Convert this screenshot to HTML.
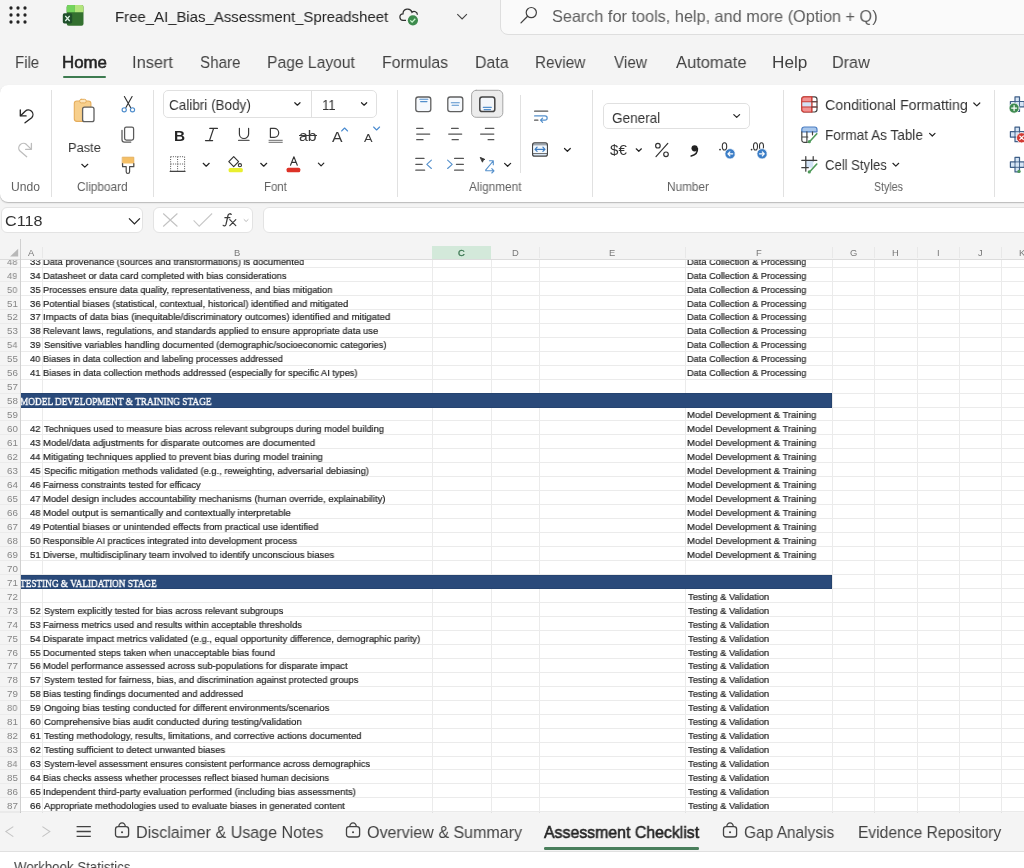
<!DOCTYPE html>
<html><head><meta charset="utf-8"><style>
html,body{margin:0;padding:0}
body{width:1024px;height:868px;overflow:hidden;position:relative;background:#f4f4f4;font-family:"Liberation Sans",sans-serif}
.a{position:absolute}
.t{position:absolute;white-space:pre;transform-origin:0 0;will-change:transform}
#top{position:absolute;left:0;top:0;width:1024px;height:84px;background:#f4f4f4}
</style></head><body><div id=top></div><svg class=a style="left:0;top:0" width="40" height="30" fill="#242424"><circle cx="11" cy="8" r="1.65"/><circle cx="11" cy="15" r="1.65"/><circle cx="11" cy="22" r="1.65"/><circle cx="18" cy="8" r="1.65"/><circle cx="18" cy="15" r="1.65"/><circle cx="18" cy="22" r="1.65"/><circle cx="25" cy="8" r="1.65"/><circle cx="25" cy="15" r="1.65"/><circle cx="25" cy="22" r="1.65"/></svg><svg class=a style="left:60px;top:3px" width="28" height="26" viewBox="60 3 28 26">
<rect x="66.7" y="5.1" width="16.8" height="20.7" rx="2" fill="#33702f"/>
<path d="M68.7 5.1h6.2v7.1h-8.2v-5.1a2 2 0 0 1 2-2z" fill="#74d45c"/>
<path d="M74.9 5.1h6.6a2 2 0 0 1 2 2v5.1h-8.6z" fill="#b3e57c"/>
<rect x="62.8" y="13.3" width="9.4" height="10.1" rx="1.6" fill="#1f4f2b"/>
<path d="M65.3 15.8l4.4 5.2M69.7 15.8l-4.4 5.2" stroke="#dff5e6" stroke-width="1.3"/>
</svg><div class=t style="left:114.73px;top:9.00px;font-size:15.3px;line-height:15.3px;color:#242424;transform:scaleX(0.9764);">Free_AI_Bias_Assessment_Spreadsheet</div><svg class=a style="left:395px;top:3px" width="30" height="26" viewBox="395 3 30 26">
<path d="M406 20.4h-2.6a3.3 3.3 0 0 1-0.4-6.6a4.6 4.6 0 0 1 9-1.4a3.2 3.2 0 0 1 5.4 2.3" fill="none" stroke="#303030" stroke-width="1.25"/>
<circle cx="412.9" cy="20.3" r="5.1" fill="#3d8b4d"/>
<path d="M410.3 20.4l1.8 1.7l3.2-3.4" fill="none" stroke="#c9f5cf" stroke-width="1.3"/>
</svg><svg class=a style="left:455px;top:12px" width="14" height="10"><path d="M2.3 2.2l4.8 4.8l4.8-4.8" fill="none" stroke="#424242" stroke-width="1.1"/></svg><div class=a style="left:500px;top:-8px;width:540px;height:42.8px;background:#fafafa;border:1px solid #dedede;border-radius:8px;box-sizing:border-box"></div><svg class=a style="left:518px;top:5px" width="22" height="22" viewBox="518 5 22 22"><circle cx="531.3" cy="12.6" r="5.1" fill="none" stroke="#424242" stroke-width="1.2"/><path d="M527.6 16.3l-6.6 6.6" stroke="#424242" stroke-width="1.3" stroke-linecap="round"/></svg><div class=t style="left:552.29px;top:8.00px;font-size:16.5px;line-height:16.5px;color:#5c5c5c;transform:scaleX(0.9847);">Search for tools, help, and more (Option + Q)</div><div class=t style="left:14.73px;top:55.00px;font-size:16.7px;line-height:16.7px;color:#424242;transform:scaleX(0.8986);">File</div><div class=t style="left:61.88px;top:55.00px;font-size:16.7px;line-height:16.7px;color:#242424;transform:scaleX(1.0102);-webkit-text-stroke:0.55px #242424;">Home</div><div class=t style="left:132.42px;top:55.00px;font-size:16.7px;line-height:16.7px;color:#424242;transform:scaleX(0.9823);">Insert</div><div class=t style="left:200.43px;top:55.00px;font-size:16.7px;line-height:16.7px;color:#424242;transform:scaleX(0.9086);">Share</div><div class=t style="left:267.18px;top:55.00px;font-size:16.7px;line-height:16.7px;color:#424242;transform:scaleX(0.9380);">Page Layout</div><div class=t style="left:382.46px;top:55.00px;font-size:16.7px;line-height:16.7px;color:#424242;transform:scaleX(0.9488);">Formulas</div><div class=t style="left:474.96px;top:55.00px;font-size:16.7px;line-height:16.7px;color:#424242;transform:scaleX(0.9537);">Data</div><div class=t style="left:535.20px;top:55.00px;font-size:16.7px;line-height:16.7px;color:#424242;transform:scaleX(0.9170);">Review</div><div class=t style="left:613.75px;top:55.00px;font-size:16.7px;line-height:16.7px;color:#424242;transform:scaleX(0.9211);">View</div><div class=t style="left:675.50px;top:55.00px;font-size:16.7px;line-height:16.7px;color:#424242;transform:scaleX(0.9872);">Automate</div><div class=t style="left:771.66px;top:55.00px;font-size:16.7px;line-height:16.7px;color:#424242;transform:scaleX(1.0289);">Help</div><div class=t style="left:832.44px;top:55.00px;font-size:16.7px;line-height:16.7px;color:#424242;transform:scaleX(0.9691);">Draw</div><div class=a style="left:62.8px;top:75.9px;width:43.6px;height:2.2px;background:#3d7b50;border-radius:1px"></div><div class=a style="left:0;top:84.6px;width:1060px;height:117px;background:#fff;border-radius:8px;box-shadow:0 1px 1.5px rgba(0,0,0,.22),0 0.5px 0 rgba(0,0,0,.08)"></div><div class=a style="left:50.75px;top:90px;width:1px;height:106.5px;background:#e1e1e1"></div><div class=a style="left:153.10px;top:90px;width:1px;height:106.5px;background:#e1e1e1"></div><div class=a style="left:396.90px;top:90px;width:1px;height:106.5px;background:#e1e1e1"></div><div class=a style="left:591.70px;top:90px;width:1px;height:106.5px;background:#e1e1e1"></div><div class=a style="left:783.20px;top:90px;width:1px;height:106.5px;background:#e1e1e1"></div><div class=a style="left:993.50px;top:90px;width:1px;height:106.5px;background:#e1e1e1"></div><div class=a style="left:519.6px;top:95px;width:1px;height:78px;background:#e1e1e1"></div><div class=t style="left:10.85px;top:181.00px;font-size:12.1px;line-height:12.1px;color:#616161;transform:scaleX(0.9899);">Undo</div><div class=t style="left:76.84px;top:181.00px;font-size:12.1px;line-height:12.1px;color:#616161;transform:scaleX(0.9793);">Clipboard</div><div class=t style="left:263.81px;top:181.00px;font-size:12.1px;line-height:12.1px;color:#616161;transform:scaleX(0.9439);">Font</div><div class=t style="left:468.70px;top:181.00px;font-size:12.1px;line-height:12.1px;color:#616161;transform:scaleX(0.9731);">Alignment</div><div class=t style="left:666.58px;top:181.00px;font-size:12.1px;line-height:12.1px;color:#616161;transform:scaleX(0.9755);">Number</div><div class=t style="left:874.27px;top:181.00px;font-size:12.1px;line-height:12.1px;color:#616161;transform:scaleX(0.8728);">Styles</div><svg class=a style="left:0;top:84px" width="1024" height="118" viewBox="0 84 1024 118" fill="none" stroke-linecap="round" stroke-linejoin="round">
<!-- undo -->
<path d="M20.3 110v5.9h5.8" stroke="#242424" stroke-width="1.3"/>
<path d="M20.8 115.5l4.4-4.3a4.6 4.6 0 0 1 6.5 6.5l-6.7 5.1" stroke="#242424" stroke-width="1.3"/>
<!-- redo -->
<path d="M31.4 143.4v5.9h-5.8" stroke="#bdbdbd" stroke-width="1.3"/>
<path d="M30.9 148.9l-4.4-4.3a4.6 4.6 0 0 0-6.5 6.5l6.7 5.6" stroke="#bdbdbd" stroke-width="1.3"/>
<!-- paste -->
<rect x="74.3" y="101" width="16.6" height="20.4" rx="2.6" fill="#f7cf8c" stroke="#e5ad5c" stroke-width="1.1"/>
<rect x="79.6" y="99.3" width="6.6" height="3.6" rx="1.6" fill="#fbe6c0" stroke="#e5ad5c" stroke-width="1"/>
<rect x="82.6" y="107.2" width="11.4" height="14.5" rx="2" fill="#fff" stroke="#5f5f5f" stroke-width="1.3"/>
<path d="M81.8 164.3l3 2.8l3-2.8" stroke="#242424" stroke-width="1.2"/>
<!-- cut -->
<path d="M124.4 96.5l6.2 11M132.1 96.5l-6.2 11" stroke="#333" stroke-width="1.15"/>
<circle cx="124.2" cy="109.8" r="2.1" stroke="#4d8ccc" stroke-width="1.15" fill="#fff"/>
<circle cx="132.5" cy="109.8" r="2.1" stroke="#4d8ccc" stroke-width="1.15" fill="#fff"/>
<!-- copy -->
<rect x="124.6" y="127.1" width="9" height="12.9" rx="1.7" stroke="#5a5a5a" stroke-width="1.25" fill="#fff"/>
<path d="M122 130.3v9.4a2.4 2.4 0 0 0 2.4 2.4h6.4" stroke="#5a5a5a" stroke-width="1.25"/>
<!-- format painter -->
<path d="M122.6 157.2h11.2v8.4h-11.2z" fill="#f5bf65" stroke="#e0a850" stroke-width="0.8"/>
<path d="M122.6 163.5v3.2h3.6v5.1a1.7 1.7 0 0 0 3.4 0v-5.1h4.2v-3.2" stroke="#4a4a4a" stroke-width="1.2" fill="#fff"/>
<!-- font chevrons -->
<path d="M294.8 102.7l2.6 2.5l2.6-2.5" stroke="#242424" stroke-width="1.2"/>
<path d="M361.5 102.7l2.6 2.5l2.6-2.5" stroke="#242424" stroke-width="1.2"/>
<!-- I -->
<path d="M209.8 128.4h7.6M205.5 140.6h7.1M213.6 128.4l-4.1 12.2" stroke="#333" stroke-width="1.25"/>
<!-- U -->
<path d="M239.4 128.3v5.6a4.6 4.6 0 0 0 9.2 0v-5.6" stroke="#3a3a3a" stroke-width="1.2"/>
<path d="M238.6 140.4h10.4" stroke="#5a5a5a" stroke-width="1.3"/>
<!-- D -->
<path d="M270.4 128.3v9h3.8a4.5 4.5 0 0 0 0-9z" stroke="#3a3a3a" stroke-width="1.2"/>
<path d="M269 140.3h13.3M269 142.3h13.3" stroke="#6a6a6a" stroke-width="1"/>
<!-- Borders -->
<path d="M170.6 156.7h14M170.6 164h14M170.6 156.7v14.5M177.6 156.7v14.5M184.6 156.7v14.5" stroke="#555" stroke-width="1" stroke-dasharray="1 1.3" stroke-linecap="butt"/>
<path d="M170.2 171.4h14.8" stroke="#444" stroke-width="1.2"/>
<path d="M203.2 163.3l3 2.9l3-2.9" stroke="#242424" stroke-width="1.2"/>
<!-- fill -->
<rect x="228.6" y="168" width="14.2" height="4.3" rx="1.5" fill="#e9ef2f" stroke="none"/>
<path d="M233.7 156.6l4.9 5.1l-4.9 4.9l-4.9-4.9z" stroke="#333" stroke-width="1.15"/>
<circle cx="239.9" cy="165.2" r="1.6" stroke="#333" stroke-width="1.1"/>
<path d="M260.7 163.3l3 2.9l3-2.9" stroke="#242424" stroke-width="1.2"/>
<!-- font color -->
<rect x="286.6" y="167.7" width="13.7" height="4.6" rx="1.6" fill="#dd3227" stroke="none"/>
<path d="M290.5 165.3l3.4-8.6l3.4 8.6M291.6 162.4h4.6" stroke="#333" stroke-width="1.1"/>
<path d="M318.4 163.2l2.7 2.7l2.7-2.7" stroke="#242424" stroke-width="1.2"/>
<!-- alignment top row -->
<rect x="415.8" y="97" width="15" height="14.6" rx="2.4" fill="#f6f9fd" stroke="#5f5f5f" stroke-width="1.3"/>
<path d="M419.8 99.2h8M420.6 101.6h6.4" stroke="#5490cc" stroke-width="1.1"/>
<rect x="447.8" y="97" width="15" height="14.6" rx="2.4" fill="#f6f9fd" stroke="#5f5f5f" stroke-width="1.3"/>
<path d="M451.3 102.8h8M452.1 105.2h6.4" stroke="#5490cc" stroke-width="1.1"/>
<rect x="471.6" y="90.3" width="31.2" height="27" rx="4.5" fill="#ececec" stroke="#a6a6a6" stroke-width="1"/>
<rect x="479.8" y="97" width="15" height="14.6" rx="2.4" fill="#f3f6fa" stroke="#444" stroke-width="1.5"/>
<path d="M483.3 107.4h8M484.1 109.6h6.4" stroke="#5490cc" stroke-width="1.1"/>
<!-- row 2 -->
<path d="M416.7 128.4h6.3M416.7 134h13M416.7 139.7h6.3" stroke="#555" stroke-width="1.25"/>
<path d="M451.6 128.4h6.6M448.7 134h13M452.1 139.7h6.2" stroke="#555" stroke-width="1.25"/>
<path d="M485.4 128.4h8.4M480.6 134h13.2M488.1 139.7h5.7" stroke="#555" stroke-width="1.25"/>
<!-- row 3 -->
<path d="M415.8 158.4h8.2M415.8 164.3h6.4M415.8 170.2h8.8" stroke="#555" stroke-width="1.25"/>
<path d="M431.4 160.1l-4.6 4.2l4.6 4.2" stroke="#5490cc" stroke-width="1.1"/>
<path d="M454.6 158.4h8.8M456.4 164.3h7M454.6 170.2h8.8" stroke="#555" stroke-width="1.25"/>
<path d="M447.6 160.1l4.6 4.2l-4.6 4.2" stroke="#5490cc" stroke-width="1.1"/>
<path d="M480.6 157.6l4.2 1.8l-1.6 0.6l-0.6 1.8z" stroke="#333" stroke-width="1" fill="#333"/>
<path d="M485.6 170.2l7.6-9.2M489.4 160.8h3.9v3.9M485.8 170.8h8M491.8 168.6l2.2 2.2l-2.2 2.2" stroke="#5490cc" stroke-width="1.1"/>
<path d="M504.6 163.4l3 2.9l3-2.9" stroke="#242424" stroke-width="1.2"/>
<!-- wrap -->
<path d="M534.6 111.2h13.1" stroke="#555" stroke-width="1.25"/>
<path d="M534.6 115.9h10.4a2.15 2.15 0 0 1 0 4.3h-4.4M542.6 118.1l-2.1 2.1l2.1 2.1" stroke="#5490cc" stroke-width="1.2"/>
<path d="M534.6 120.2h3.3" stroke="#555" stroke-width="1.25"/>
<!-- merge -->
<rect x="532.6" y="142.8" width="14.8" height="13.4" rx="2" fill="#d8e6f4" stroke="#444" stroke-width="1.2"/>
<path d="M533.2 145h13.6M533.2 153.5h13.6" stroke="#555" stroke-width="0.9"/>
<rect x="533.3" y="145.4" width="13.4" height="7.7" fill="#f3f8fd" stroke="none"/>
<path d="M535 149.3h10M537.1 147.2l-2.1 2.1l2.1 2.1M542.9 147.2l2.1 2.1l-2.1 2.1" stroke="#3d7cc0" stroke-width="1.2"/>
<path d="M564.5 148.5l2.9 2.8l2.9-2.8" stroke="#242424" stroke-width="1.2"/>
<!-- number chevrons -->
<path d="M733.8 114.6l2.9 2.8l2.9-2.8" stroke="#242424" stroke-width="1.2"/>
<path d="M636.2 148.8l2.6 2.5l2.6-2.5" stroke="#242424" stroke-width="1.2"/>
<!-- decimals -->
<circle cx="720" cy="149.6" r="0.9" fill="#333" stroke="none"/>
<ellipse cx="724.5" cy="146.4" rx="2.2" ry="3.6" stroke="#333" stroke-width="1.1"/>
<circle cx="730.1" cy="153.8" r="5.2" fill="#3b7dc6" stroke="#fff" stroke-width="0.8"/>
<path d="M732.7 153.8h-4.6M729.9 151.8l-2 2l2 2" stroke="#fff" stroke-width="1.2"/>
<circle cx="751.6" cy="149.6" r="0.9" fill="#333" stroke="none"/>
<ellipse cx="755.5" cy="146.4" rx="2" ry="3.6" stroke="#333" stroke-width="1.1"/>
<ellipse cx="761.5" cy="146.4" rx="2" ry="3.6" stroke="#333" stroke-width="1.1"/>
<circle cx="762.1" cy="153.8" r="5.2" fill="#3b7dc6" stroke="#fff" stroke-width="0.8"/>
<path d="M759.5 153.8h4.6M762.3 151.8l2 2l-2 2" stroke="#fff" stroke-width="1.2"/>
<!-- CF icon -->
<rect x="801.8" y="96.8" width="15.2" height="15.2" rx="2.4" fill="#fff" stroke="#444" stroke-width="1.2"/>
<path d="M804.2 96.8h7.6v15.2h-7.6a2.4 2.4 0 0 1-2.4-2.4v-10.4a2.4 2.4 0 0 1 2.4-2.4z" fill="#f19292" stroke="#d8413a" stroke-width="1.2"/>
<rect x="802.4" y="102" width="9.4" height="4.8" fill="#d3e3f6" stroke="none"/>
<path d="M801.8 101.8h15.2M801.8 107h15.2M811.8 96.8v15.2" stroke="#c9403a" stroke-width="1.1"/>
<path d="M811.8 101.8h5.2M811.8 107h5.2" stroke="#444" stroke-width="1.1"/>
<!-- FAT icon -->
<path d="M801.8 131.8v-2.4a2.4 2.4 0 0 1 2.4-2.4h10.4a2.4 2.4 0 0 1 2.4 2.4v2.4z" fill="#a9c7ec" stroke="#4d7fc2" stroke-width="1.2"/>
<path d="M801.8 131.8v8.2a2.4 2.4 0 0 0 2.4 2.4h3M801.8 137h6M806.9 131.8v10.2M812.5 131.8v3" stroke="#444" stroke-width="1.2"/>
<path d="M816.8 133.8l-6.6 7.2" stroke="#4f9a5a" stroke-width="1.6"/>
<circle cx="809.3" cy="141.7" r="1.6" fill="#4f9a5a" stroke="none"/>
<!-- Cell styles icon -->
<rect x="805.8" y="160.4" width="7.4" height="7.3" fill="#d3e3f6" stroke="none"/>
<path d="M801.8 160.4h15M801.8 167.7h6.5M805.8 156.6v14.6M813.2 156.6v4.2" stroke="#3a3a3a" stroke-width="1.2"/>
<path d="M816.8 164l-6.6 7.2" stroke="#4f9a5a" stroke-width="1.6"/>
<circle cx="809.3" cy="171.9" r="1.6" fill="#4f9a5a" stroke="none"/>
<!-- cells group icons -->
<path d="M1015 96.9h4.5v4.6h4.8v5.4h-4.8v4.6h-4.5v-4.6h-4.6v-5.4h4.6z" fill="#d6e5f5" stroke="#3f5f88" stroke-width="1.2"/><path d="M1015 101.5v5.4M1019.5 101.5v5.4M1015 101.5h4.5M1015 106.9h4.5" stroke="#3f5f88" stroke-width="0.9"/>
<circle cx="1014.1" cy="108.1" r="5.1" fill="#3e8a4e" stroke="#fff" stroke-width="0.8"/>
<path d="M1014.1 105.6v5M1011.6 108.1h5" stroke="#fff" stroke-width="1.2"/>
<path d="M1015 127.1h4.5v4.6h4.8v5.4h-4.8v4.6h-4.5v-4.6h-4.6v-5.4h4.6z" fill="#d6e5f5" stroke="#3f5f88" stroke-width="1.2"/><path d="M1015 131.7v5.4M1019.5 131.7v5.4M1015 131.7h4.5M1015 137.1h4.5" stroke="#3f5f88" stroke-width="0.9"/>
<circle cx="1021.6" cy="137.8" r="5.1" fill="#d23a32" stroke="#fff" stroke-width="0.8"/>
<path d="M1019.8 136l3.6 3.6M1023.4 136l-3.6 3.6" stroke="#fff" stroke-width="1.1"/>
<path d="M1015 157.3h4.5v4.6h4.8v5.4h-4.8v4.6h-4.5v-4.6h-4.6v-5.4h4.6z" fill="#d6e5f5" stroke="#3f5f88" stroke-width="1.2"/><path d="M1015 161.9v5.4M1019.5 161.9v5.4M1015 161.9h4.5M1015 167.3h4.5" stroke="#3f5f88" stroke-width="0.9"/>
<circle cx="1019" cy="171.4" r="1.7" fill="#4f9a5a" stroke="none"/>
<!-- styles chevrons -->
<path d="M973.8 103l3 2.9l3-2.9M929.6 133.3l2.7 2.7l2.7-2.7M892.9 163.3l2.9 2.8l2.9-2.8" stroke="#242424" stroke-width="1.2"/>
<!-- percent -->
<circle cx="657.9" cy="145.7" r="2.3" stroke="#333" stroke-width="1.2"/>
<circle cx="666" cy="154.3" r="2.3" stroke="#333" stroke-width="1.2"/>
<path d="M667.8 143.4l-11.8 13.2" stroke="#333" stroke-width="1.2"/>
<!-- comma style -->
<circle cx="694.6" cy="148.3" r="3.1" fill="#222" stroke="none"/>
<path d="M697.4 148.6c0.3 3.6-2 6.4-6.2 7.4" stroke="#222" stroke-width="1.6"/>
</svg>
<div class=t style="left:173.84px;top:129.00px;font-size:14px;line-height:14px;color:#242424;font-weight:700;transform:scaleX(1.0971);">B</div><div class=t style="left:299.00px;top:129.00px;font-size:14px;line-height:14px;color:#3a3a3a;transform:scaleX(1.1327);">ab</div><div class=a style="left:298.6px;top:134.7px;width:18.3px;height:1.2px;background:#3a3a3a"></div><div class=t style="left:331.60px;top:130.00px;font-size:14.5px;line-height:14.5px;color:#3a3a3a;transform:scaleX(1.0881);">A</div><div class=t style="left:363.60px;top:133.00px;font-size:11.5px;line-height:11.5px;color:#3a3a3a;transform:scaleX(1.1130);">A</div><svg class=a style="left:340px;top:125px" width="42" height="10" viewBox="340 125 42 10" fill="none" stroke="#4a8bd0" stroke-width="1.1" stroke-linecap="round" stroke-linejoin="round"><path d="M341.6 131l3-3l3 3"/><path d="M373.6 127l3 3l3-3"/></svg><div class=t style="left:609.70px;top:143.00px;font-size:14px;line-height:14px;color:#333;transform:scaleX(1.0814);">$€</div><div class=t style="left:67.75px;top:141.00px;font-size:13.7px;line-height:13.7px;color:#333333;transform:scaleX(0.9354);">Paste</div><div class=a style="left:163.4px;top:90.2px;width:214.1px;height:27.6px;border:1px solid #e0e0e0;border-radius:5px;box-sizing:border-box"></div><div class=a style="left:310.6px;top:91px;width:1px;height:26px;background:#e0e0e0"></div><div class=t style="left:168.77px;top:98.00px;font-size:14.2px;line-height:14.2px;color:#333333;transform:scaleX(0.9526);">Calibri (Body)</div><div class=t style="left:321.68px;top:98.00px;font-size:14.2px;line-height:14.2px;color:#333333;transform:scaleX(0.9264);">11</div><div class=a style="left:602.7px;top:102.6px;width:147.3px;height:26.6px;border:1px solid #e0e0e0;border-radius:5px;box-sizing:border-box"></div><div class=t style="left:611.96px;top:111.00px;font-size:14.4px;line-height:14.4px;color:#333333;transform:scaleX(0.9414);">General</div><div class=t style="left:825.03px;top:98.00px;font-size:14.8px;line-height:14.8px;color:#333333;transform:scaleX(0.9588);">Conditional Formatting</div><div class=t style="left:824.64px;top:128.00px;font-size:14.8px;line-height:14.8px;color:#333333;transform:scaleX(0.9180);">Format As Table</div><div class=t style="left:825.09px;top:158.00px;font-size:14.8px;line-height:14.8px;color:#333333;transform:scaleX(0.8843);">Cell Styles</div><div class=a style="left:1px;top:206.8px;width:142px;height:26.2px;background:#fff;border:1px solid #e3e3e3;border-radius:6px;box-sizing:border-box"></div><div class=t style="left:5.14px;top:213.00px;font-size:15.5px;line-height:15.5px;color:#333333;transform:scaleX(1.0420);">C118</div><svg class=a style="left:126px;top:215px" width="16" height="12"><path d="M3 3.4l5.45 5.45l5.45-5.45" fill="none" stroke="#242424" stroke-width="1.3"/></svg><div class=a style="left:153.3px;top:206.8px;width:100px;height:26.2px;background:#fff;border:1px solid #e3e3e3;border-radius:6px;box-sizing:border-box"></div><svg class=a style="left:153px;top:207px" width="100" height="26" viewBox="153 207 100 26"><path d="M163.2 213.5l14.2 13M177.4 213.5l-14.2 13" stroke="#c2c2c2" stroke-width="1.1"/><path d="M193.6 220.3l5.6 5.8l12.9-12.6" fill="none" stroke="#c8c8c8" stroke-width="1.1"/><path d="M243.8 219.3l2.3 2.2l2.3-2.2" fill="none" stroke="#b0b0b0" stroke-width="0.9"/></svg><svg class=a style="left:215px;top:205px" width="30" height="30" viewBox="215 205 30 30" fill="none" stroke="#3a3a3a" stroke-linecap="round"><path d="M231.2 214.4c-0.6-0.9-2.4-1-3.1 0.6l-2.1 9.4c-0.4 1.6-2 1.8-2.8 0.9" stroke-width="1.25"/><path d="M224.9 217.7h5" stroke-width="1.2"/><path d="M229.8 219.6l6 6M235.8 219.6l-6 6" stroke-width="1.2"/></svg><div class=a style="left:263px;top:206.8px;width:800px;height:26.2px;background:#fff;border:1px solid #e3e3e3;border-radius:6px;box-sizing:border-box"></div><div class=a style="left:20.2px;top:239px;width:1004px;height:573.5px;background:#fff"></div><div class=a style="left:0;top:258px;width:20.2px;height:554.5px;background:#f4f4f4"></div><div class=a style="left:0;top:266.90px;width:1024px;height:1px;background:#ebebeb"></div><div class=a style="left:0;top:280.86px;width:1024px;height:1px;background:#ebebeb"></div><div class=a style="left:0;top:294.82px;width:1024px;height:1px;background:#ebebeb"></div><div class=a style="left:0;top:308.78px;width:1024px;height:1px;background:#ebebeb"></div><div class=a style="left:0;top:322.74px;width:1024px;height:1px;background:#ebebeb"></div><div class=a style="left:0;top:336.70px;width:1024px;height:1px;background:#ebebeb"></div><div class=a style="left:0;top:350.66px;width:1024px;height:1px;background:#ebebeb"></div><div class=a style="left:0;top:364.62px;width:1024px;height:1px;background:#ebebeb"></div><div class=a style="left:0;top:378.58px;width:1024px;height:1px;background:#ebebeb"></div><div class=a style="left:0;top:392.54px;width:1024px;height:1px;background:#ebebeb"></div><div class=a style="left:0;top:406.50px;width:1024px;height:1px;background:#ebebeb"></div><div class=a style="left:0;top:420.46px;width:1024px;height:1px;background:#ebebeb"></div><div class=a style="left:0;top:434.42px;width:1024px;height:1px;background:#ebebeb"></div><div class=a style="left:0;top:448.38px;width:1024px;height:1px;background:#ebebeb"></div><div class=a style="left:0;top:462.34px;width:1024px;height:1px;background:#ebebeb"></div><div class=a style="left:0;top:476.30px;width:1024px;height:1px;background:#ebebeb"></div><div class=a style="left:0;top:490.26px;width:1024px;height:1px;background:#ebebeb"></div><div class=a style="left:0;top:504.22px;width:1024px;height:1px;background:#ebebeb"></div><div class=a style="left:0;top:518.18px;width:1024px;height:1px;background:#ebebeb"></div><div class=a style="left:0;top:532.14px;width:1024px;height:1px;background:#ebebeb"></div><div class=a style="left:0;top:546.10px;width:1024px;height:1px;background:#ebebeb"></div><div class=a style="left:0;top:560.06px;width:1024px;height:1px;background:#ebebeb"></div><div class=a style="left:0;top:574.02px;width:1024px;height:1px;background:#ebebeb"></div><div class=a style="left:0;top:587.98px;width:1024px;height:1px;background:#ebebeb"></div><div class=a style="left:0;top:601.94px;width:1024px;height:1px;background:#ebebeb"></div><div class=a style="left:0;top:615.90px;width:1024px;height:1px;background:#ebebeb"></div><div class=a style="left:0;top:629.86px;width:1024px;height:1px;background:#ebebeb"></div><div class=a style="left:0;top:643.82px;width:1024px;height:1px;background:#ebebeb"></div><div class=a style="left:0;top:657.78px;width:1024px;height:1px;background:#ebebeb"></div><div class=a style="left:0;top:671.74px;width:1024px;height:1px;background:#ebebeb"></div><div class=a style="left:0;top:685.70px;width:1024px;height:1px;background:#ebebeb"></div><div class=a style="left:0;top:699.66px;width:1024px;height:1px;background:#ebebeb"></div><div class=a style="left:0;top:713.62px;width:1024px;height:1px;background:#ebebeb"></div><div class=a style="left:0;top:727.58px;width:1024px;height:1px;background:#ebebeb"></div><div class=a style="left:0;top:741.54px;width:1024px;height:1px;background:#ebebeb"></div><div class=a style="left:0;top:755.50px;width:1024px;height:1px;background:#ebebeb"></div><div class=a style="left:0;top:769.46px;width:1024px;height:1px;background:#ebebeb"></div><div class=a style="left:0;top:783.42px;width:1024px;height:1px;background:#ebebeb"></div><div class=a style="left:0;top:797.38px;width:1024px;height:1px;background:#ebebeb"></div><div class=a style="left:0;top:811.34px;width:1024px;height:1px;background:#ebebeb"></div><div class=a style="left:41.70px;top:258px;width:1px;height:554.5px;background:#ebebeb"></div><div class=a style="left:431.50px;top:258px;width:1px;height:554.5px;background:#ebebeb"></div><div class=a style="left:490.60px;top:258px;width:1px;height:554.5px;background:#ebebeb"></div><div class=a style="left:539.00px;top:258px;width:1px;height:554.5px;background:#ebebeb"></div><div class=a style="left:684.70px;top:258px;width:1px;height:554.5px;background:#ebebeb"></div><div class=a style="left:831.90px;top:258px;width:1px;height:554.5px;background:#ebebeb"></div><div class=a style="left:874.10px;top:258px;width:1px;height:554.5px;background:#ebebeb"></div><div class=a style="left:916.50px;top:258px;width:1px;height:554.5px;background:#ebebeb"></div><div class=a style="left:958.90px;top:258px;width:1px;height:554.5px;background:#ebebeb"></div><div class=a style="left:1001.20px;top:258px;width:1px;height:554.5px;background:#ebebeb"></div><div class=a style="left:1043.50px;top:258px;width:1px;height:554.5px;background:#ebebeb"></div><div class=a style="left:20.2px;top:393.34px;width:812.2px;height:14.36px;background:#2a4a7a;box-shadow:inset 0 0 0 0.6px #233f66"></div><div class=t style="left:20.35px;top:396.00px;font-size:11px;line-height:11px;color:#ffffff;font-family:'Liberation Serif',serif;transform:scaleX(0.8438);-webkit-text-stroke:0.4px #fff;">MODEL DEVELOPMENT &amp; TRAINING STAGE</div><div class=a style="left:20.2px;top:574.82px;width:812.2px;height:14.36px;background:#2a4a7a;box-shadow:inset 0 0 0 0.6px #233f66"></div><div class=t style="left:20.36px;top:578.00px;font-size:11px;line-height:11px;color:#ffffff;font-family:'Liberation Serif',serif;transform:scaleX(0.8405);-webkit-text-stroke:0.4px #fff;">TESTING &amp; VALIDATION STAGE</div><div class=a style="left:0;top:258.3px;width:1024px;height:554.3px;overflow:hidden"><div class=a style="left:0;top:-258.3px;width:1024px;height:868px"><div class=t style="left:29.90px;top:257.00px;font-size:9.8px;line-height:9.8px;color:#1e1e1e;transform:scaleX(0.9709);-webkit-text-stroke:0.2px #1e1e1e;">33</div><div class=t style="left:43.37px;top:257.00px;font-size:9.8px;line-height:9.8px;color:#1e1e1e;transform:scaleX(0.9539);-webkit-text-stroke:0.2px #1e1e1e;">Data provenance (sources and transformations) is documented</div><div class=t style="left:687.18px;top:257.00px;font-size:9.8px;line-height:9.8px;color:#1e1e1e;transform:scaleX(0.9403);-webkit-text-stroke:0.2px #1e1e1e;">Data Collection &amp; Processing</div><div class=t style="left:29.91px;top:271.00px;font-size:9.8px;line-height:9.8px;color:#1e1e1e;transform:scaleX(0.9565);-webkit-text-stroke:0.2px #1e1e1e;">34</div><div class=t style="left:43.37px;top:271.00px;font-size:9.8px;line-height:9.8px;color:#1e1e1e;transform:scaleX(0.9573);-webkit-text-stroke:0.2px #1e1e1e;">Datasheet or data card completed with bias considerations</div><div class=t style="left:687.18px;top:271.00px;font-size:9.8px;line-height:9.8px;color:#1e1e1e;transform:scaleX(0.9403);-webkit-text-stroke:0.2px #1e1e1e;">Data Collection &amp; Processing</div><div class=t style="left:29.90px;top:285.00px;font-size:9.8px;line-height:9.8px;color:#1e1e1e;transform:scaleX(0.9709);-webkit-text-stroke:0.2px #1e1e1e;">35</div><div class=t style="left:43.38px;top:285.00px;font-size:9.8px;line-height:9.8px;color:#1e1e1e;transform:scaleX(0.9457);-webkit-text-stroke:0.2px #1e1e1e;">Processes ensure data quality, representativeness, and bias mitigation</div><div class=t style="left:687.18px;top:285.00px;font-size:9.8px;line-height:9.8px;color:#1e1e1e;transform:scaleX(0.9403);-webkit-text-stroke:0.2px #1e1e1e;">Data Collection &amp; Processing</div><div class=t style="left:29.90px;top:299.00px;font-size:9.8px;line-height:9.8px;color:#1e1e1e;transform:scaleX(0.9709);-webkit-text-stroke:0.2px #1e1e1e;">36</div><div class=t style="left:43.36px;top:299.00px;font-size:9.8px;line-height:9.8px;color:#1e1e1e;transform:scaleX(0.9646);-webkit-text-stroke:0.2px #1e1e1e;">Potential biases (statistical, contextual, historical) identified and mitigated</div><div class=t style="left:687.18px;top:299.00px;font-size:9.8px;line-height:9.8px;color:#1e1e1e;transform:scaleX(0.9403);-webkit-text-stroke:0.2px #1e1e1e;">Data Collection &amp; Processing</div><div class=t style="left:29.90px;top:312.00px;font-size:9.8px;line-height:9.8px;color:#1e1e1e;transform:scaleX(0.9709);-webkit-text-stroke:0.2px #1e1e1e;">37</div><div class=t style="left:43.35px;top:312.00px;font-size:9.8px;line-height:9.8px;color:#1e1e1e;transform:scaleX(0.9751);-webkit-text-stroke:0.2px #1e1e1e;">Impacts of data bias (inequitable/discriminatory outcomes) identified and mitigated</div><div class=t style="left:687.18px;top:312.00px;font-size:9.8px;line-height:9.8px;color:#1e1e1e;transform:scaleX(0.9403);-webkit-text-stroke:0.2px #1e1e1e;">Data Collection &amp; Processing</div><div class=t style="left:29.90px;top:326.00px;font-size:9.8px;line-height:9.8px;color:#1e1e1e;transform:scaleX(0.9709);-webkit-text-stroke:0.2px #1e1e1e;">38</div><div class=t style="left:43.37px;top:326.00px;font-size:9.8px;line-height:9.8px;color:#1e1e1e;transform:scaleX(0.9510);-webkit-text-stroke:0.2px #1e1e1e;">Relevant laws, regulations, and standards applied to ensure appropriate data use</div><div class=t style="left:687.18px;top:326.00px;font-size:9.8px;line-height:9.8px;color:#1e1e1e;transform:scaleX(0.9403);-webkit-text-stroke:0.2px #1e1e1e;">Data Collection &amp; Processing</div><div class=t style="left:29.90px;top:340.00px;font-size:9.8px;line-height:9.8px;color:#1e1e1e;transform:scaleX(0.9709);-webkit-text-stroke:0.2px #1e1e1e;">39</div><div class=t style="left:43.81px;top:340.00px;font-size:9.8px;line-height:9.8px;color:#1e1e1e;transform:scaleX(0.9528);-webkit-text-stroke:0.2px #1e1e1e;">Sensitive variables handling documented (demographic/socioeconomic categories)</div><div class=t style="left:687.18px;top:340.00px;font-size:9.8px;line-height:9.8px;color:#1e1e1e;transform:scaleX(0.9403);-webkit-text-stroke:0.2px #1e1e1e;">Data Collection &amp; Processing</div><div class=t style="left:30.06px;top:354.00px;font-size:9.8px;line-height:9.8px;color:#1e1e1e;transform:scaleX(0.9426);-webkit-text-stroke:0.2px #1e1e1e;">40</div><div class=t style="left:43.38px;top:354.00px;font-size:9.8px;line-height:9.8px;color:#1e1e1e;transform:scaleX(0.9351);-webkit-text-stroke:0.2px #1e1e1e;">Biases in data collection and labeling processes addressed</div><div class=t style="left:687.18px;top:354.00px;font-size:9.8px;line-height:9.8px;color:#1e1e1e;transform:scaleX(0.9403);-webkit-text-stroke:0.2px #1e1e1e;">Data Collection &amp; Processing</div><div class=t style="left:30.05px;top:368.00px;font-size:9.8px;line-height:9.8px;color:#1e1e1e;transform:scaleX(0.9565);-webkit-text-stroke:0.2px #1e1e1e;">41</div><div class=t style="left:43.38px;top:368.00px;font-size:9.8px;line-height:9.8px;color:#1e1e1e;transform:scaleX(0.9437);-webkit-text-stroke:0.2px #1e1e1e;">Biases in data collection methods addressed (especially for specific AI types)</div><div class=t style="left:687.18px;top:368.00px;font-size:9.8px;line-height:9.8px;color:#1e1e1e;transform:scaleX(0.9403);-webkit-text-stroke:0.2px #1e1e1e;">Data Collection &amp; Processing</div><div class=t style="left:687.16px;top:410.00px;font-size:9.8px;line-height:9.8px;color:#1e1e1e;transform:scaleX(0.9656);-webkit-text-stroke:0.2px #1e1e1e;">Model Development &amp; Training</div><div class=t style="left:30.05px;top:424.00px;font-size:9.8px;line-height:9.8px;color:#1e1e1e;transform:scaleX(0.9565);-webkit-text-stroke:0.2px #1e1e1e;">42</div><div class=t style="left:43.96px;top:424.00px;font-size:9.8px;line-height:9.8px;color:#1e1e1e;transform:scaleX(0.9458);-webkit-text-stroke:0.2px #1e1e1e;">Techniques used to measure bias across relevant subgroups during model building</div><div class=t style="left:687.16px;top:424.00px;font-size:9.8px;line-height:9.8px;color:#1e1e1e;transform:scaleX(0.9656);-webkit-text-stroke:0.2px #1e1e1e;">Model Development &amp; Training</div><div class=t style="left:30.05px;top:438.00px;font-size:9.8px;line-height:9.8px;color:#1e1e1e;transform:scaleX(0.9565);-webkit-text-stroke:0.2px #1e1e1e;">43</div><div class=t style="left:43.36px;top:438.00px;font-size:9.8px;line-height:9.8px;color:#1e1e1e;transform:scaleX(0.9721);-webkit-text-stroke:0.2px #1e1e1e;">Model/data adjustments for disparate outcomes are documented</div><div class=t style="left:687.16px;top:438.00px;font-size:9.8px;line-height:9.8px;color:#1e1e1e;transform:scaleX(0.9656);-webkit-text-stroke:0.2px #1e1e1e;">Model Development &amp; Training</div><div class=t style="left:30.06px;top:452.00px;font-size:9.8px;line-height:9.8px;color:#1e1e1e;transform:scaleX(0.9426);-webkit-text-stroke:0.2px #1e1e1e;">44</div><div class=t style="left:43.35px;top:452.00px;font-size:9.8px;line-height:9.8px;color:#1e1e1e;transform:scaleX(0.9734);-webkit-text-stroke:0.2px #1e1e1e;">Mitigating techniques applied to prevent bias during model training</div><div class=t style="left:687.16px;top:452.00px;font-size:9.8px;line-height:9.8px;color:#1e1e1e;transform:scaleX(0.9656);-webkit-text-stroke:0.2px #1e1e1e;">Model Development &amp; Training</div><div class=t style="left:30.05px;top:466.00px;font-size:9.8px;line-height:9.8px;color:#1e1e1e;transform:scaleX(0.9565);-webkit-text-stroke:0.2px #1e1e1e;">45</div><div class=t style="left:43.81px;top:466.00px;font-size:9.8px;line-height:9.8px;color:#1e1e1e;transform:scaleX(0.9545);-webkit-text-stroke:0.2px #1e1e1e;">Specific mitigation methods validated (e.g., reweighting, adversarial debiasing)</div><div class=t style="left:687.16px;top:466.00px;font-size:9.8px;line-height:9.8px;color:#1e1e1e;transform:scaleX(0.9656);-webkit-text-stroke:0.2px #1e1e1e;">Model Development &amp; Training</div><div class=t style="left:30.05px;top:480.00px;font-size:9.8px;line-height:9.8px;color:#1e1e1e;transform:scaleX(0.9565);-webkit-text-stroke:0.2px #1e1e1e;">46</div><div class=t style="left:43.38px;top:480.00px;font-size:9.8px;line-height:9.8px;color:#1e1e1e;transform:scaleX(0.9442);-webkit-text-stroke:0.2px #1e1e1e;">Fairness constraints tested for efficacy</div><div class=t style="left:687.16px;top:480.00px;font-size:9.8px;line-height:9.8px;color:#1e1e1e;transform:scaleX(0.9656);-webkit-text-stroke:0.2px #1e1e1e;">Model Development &amp; Training</div><div class=t style="left:30.05px;top:494.00px;font-size:9.8px;line-height:9.8px;color:#1e1e1e;transform:scaleX(0.9565);-webkit-text-stroke:0.2px #1e1e1e;">47</div><div class=t style="left:43.36px;top:494.00px;font-size:9.8px;line-height:9.8px;color:#1e1e1e;transform:scaleX(0.9632);-webkit-text-stroke:0.2px #1e1e1e;">Model design includes accountability mechanisms (human override, explainability)</div><div class=t style="left:687.16px;top:494.00px;font-size:9.8px;line-height:9.8px;color:#1e1e1e;transform:scaleX(0.9656);-webkit-text-stroke:0.2px #1e1e1e;">Model Development &amp; Training</div><div class=t style="left:30.05px;top:508.00px;font-size:9.8px;line-height:9.8px;color:#1e1e1e;transform:scaleX(0.9565);-webkit-text-stroke:0.2px #1e1e1e;">48</div><div class=t style="left:43.35px;top:508.00px;font-size:9.8px;line-height:9.8px;color:#1e1e1e;transform:scaleX(0.9767);-webkit-text-stroke:0.2px #1e1e1e;">Model output is semantically and contextually interpretable</div><div class=t style="left:687.16px;top:508.00px;font-size:9.8px;line-height:9.8px;color:#1e1e1e;transform:scaleX(0.9656);-webkit-text-stroke:0.2px #1e1e1e;">Model Development &amp; Training</div><div class=t style="left:30.05px;top:522.00px;font-size:9.8px;line-height:9.8px;color:#1e1e1e;transform:scaleX(0.9565);-webkit-text-stroke:0.2px #1e1e1e;">49</div><div class=t style="left:43.36px;top:522.00px;font-size:9.8px;line-height:9.8px;color:#1e1e1e;transform:scaleX(0.9660);-webkit-text-stroke:0.2px #1e1e1e;">Potential biases or unintended effects from practical use identified</div><div class=t style="left:687.16px;top:522.00px;font-size:9.8px;line-height:9.8px;color:#1e1e1e;transform:scaleX(0.9656);-webkit-text-stroke:0.2px #1e1e1e;">Model Development &amp; Training</div><div class=t style="left:29.91px;top:536.00px;font-size:9.8px;line-height:9.8px;color:#1e1e1e;transform:scaleX(0.9565);-webkit-text-stroke:0.2px #1e1e1e;">50</div><div class=t style="left:43.37px;top:536.00px;font-size:9.8px;line-height:9.8px;color:#1e1e1e;transform:scaleX(0.9484);-webkit-text-stroke:0.2px #1e1e1e;">Responsible AI practices integrated into development process</div><div class=t style="left:687.16px;top:536.00px;font-size:9.8px;line-height:9.8px;color:#1e1e1e;transform:scaleX(0.9656);-webkit-text-stroke:0.2px #1e1e1e;">Model Development &amp; Training</div><div class=t style="left:29.90px;top:550.00px;font-size:9.8px;line-height:9.8px;color:#1e1e1e;transform:scaleX(0.9709);-webkit-text-stroke:0.2px #1e1e1e;">51</div><div class=t style="left:43.37px;top:550.00px;font-size:9.8px;line-height:9.8px;color:#1e1e1e;transform:scaleX(0.9582);-webkit-text-stroke:0.2px #1e1e1e;">Diverse, multidisciplinary team involved to identify unconscious biases</div><div class=t style="left:687.16px;top:550.00px;font-size:9.8px;line-height:9.8px;color:#1e1e1e;transform:scaleX(0.9656);-webkit-text-stroke:0.2px #1e1e1e;">Model Development &amp; Training</div><div class=t style="left:687.75px;top:592.00px;font-size:9.8px;line-height:9.8px;color:#1e1e1e;transform:scaleX(0.9522);-webkit-text-stroke:0.2px #1e1e1e;">Testing &amp; Validation</div><div class=t style="left:29.90px;top:606.00px;font-size:9.8px;line-height:9.8px;color:#1e1e1e;transform:scaleX(0.9709);-webkit-text-stroke:0.2px #1e1e1e;">52</div><div class=t style="left:43.81px;top:606.00px;font-size:9.8px;line-height:9.8px;color:#1e1e1e;transform:scaleX(0.9407);-webkit-text-stroke:0.2px #1e1e1e;">System explicitly tested for bias across relevant subgroups</div><div class=t style="left:687.75px;top:606.00px;font-size:9.8px;line-height:9.8px;color:#1e1e1e;transform:scaleX(0.9522);-webkit-text-stroke:0.2px #1e1e1e;">Testing &amp; Validation</div><div class=t style="left:29.90px;top:620.00px;font-size:9.8px;line-height:9.8px;color:#1e1e1e;transform:scaleX(0.9709);-webkit-text-stroke:0.2px #1e1e1e;">53</div><div class=t style="left:43.37px;top:620.00px;font-size:9.8px;line-height:9.8px;color:#1e1e1e;transform:scaleX(0.9510);-webkit-text-stroke:0.2px #1e1e1e;">Fairness metrics used and results within acceptable thresholds</div><div class=t style="left:687.75px;top:620.00px;font-size:9.8px;line-height:9.8px;color:#1e1e1e;transform:scaleX(0.9522);-webkit-text-stroke:0.2px #1e1e1e;">Testing &amp; Validation</div><div class=t style="left:29.91px;top:634.00px;font-size:9.8px;line-height:9.8px;color:#1e1e1e;transform:scaleX(0.9565);-webkit-text-stroke:0.2px #1e1e1e;">54</div><div class=t style="left:43.36px;top:634.00px;font-size:9.8px;line-height:9.8px;color:#1e1e1e;transform:scaleX(0.9668);-webkit-text-stroke:0.2px #1e1e1e;">Disparate impact metrics validated (e.g., equal opportunity difference, demographic parity)</div><div class=t style="left:687.75px;top:634.00px;font-size:9.8px;line-height:9.8px;color:#1e1e1e;transform:scaleX(0.9522);-webkit-text-stroke:0.2px #1e1e1e;">Testing &amp; Validation</div><div class=t style="left:29.90px;top:648.00px;font-size:9.8px;line-height:9.8px;color:#1e1e1e;transform:scaleX(0.9709);-webkit-text-stroke:0.2px #1e1e1e;">55</div><div class=t style="left:43.37px;top:648.00px;font-size:9.8px;line-height:9.8px;color:#1e1e1e;transform:scaleX(0.9533);-webkit-text-stroke:0.2px #1e1e1e;">Documented steps taken when unacceptable bias found</div><div class=t style="left:687.75px;top:648.00px;font-size:9.8px;line-height:9.8px;color:#1e1e1e;transform:scaleX(0.9522);-webkit-text-stroke:0.2px #1e1e1e;">Testing &amp; Validation</div><div class=t style="left:29.90px;top:661.00px;font-size:9.8px;line-height:9.8px;color:#1e1e1e;transform:scaleX(0.9709);-webkit-text-stroke:0.2px #1e1e1e;">56</div><div class=t style="left:43.37px;top:661.00px;font-size:9.8px;line-height:9.8px;color:#1e1e1e;transform:scaleX(0.9497);-webkit-text-stroke:0.2px #1e1e1e;">Model performance assessed across sub-populations for disparate impact</div><div class=t style="left:687.75px;top:661.00px;font-size:9.8px;line-height:9.8px;color:#1e1e1e;transform:scaleX(0.9522);-webkit-text-stroke:0.2px #1e1e1e;">Testing &amp; Validation</div><div class=t style="left:29.90px;top:675.00px;font-size:9.8px;line-height:9.8px;color:#1e1e1e;transform:scaleX(0.9709);-webkit-text-stroke:0.2px #1e1e1e;">57</div><div class=t style="left:43.81px;top:675.00px;font-size:9.8px;line-height:9.8px;color:#1e1e1e;transform:scaleX(0.9480);-webkit-text-stroke:0.2px #1e1e1e;">System tested for fairness, bias, and discrimination against protected groups</div><div class=t style="left:687.75px;top:675.00px;font-size:9.8px;line-height:9.8px;color:#1e1e1e;transform:scaleX(0.9522);-webkit-text-stroke:0.2px #1e1e1e;">Testing &amp; Validation</div><div class=t style="left:29.90px;top:689.00px;font-size:9.8px;line-height:9.8px;color:#1e1e1e;transform:scaleX(0.9709);-webkit-text-stroke:0.2px #1e1e1e;">58</div><div class=t style="left:43.37px;top:689.00px;font-size:9.8px;line-height:9.8px;color:#1e1e1e;transform:scaleX(0.9478);-webkit-text-stroke:0.2px #1e1e1e;">Bias testing findings documented and addressed</div><div class=t style="left:687.75px;top:689.00px;font-size:9.8px;line-height:9.8px;color:#1e1e1e;transform:scaleX(0.9522);-webkit-text-stroke:0.2px #1e1e1e;">Testing &amp; Validation</div><div class=t style="left:29.90px;top:703.00px;font-size:9.8px;line-height:9.8px;color:#1e1e1e;transform:scaleX(0.9709);-webkit-text-stroke:0.2px #1e1e1e;">59</div><div class=t style="left:43.66px;top:703.00px;font-size:9.8px;line-height:9.8px;color:#1e1e1e;transform:scaleX(0.9652);-webkit-text-stroke:0.2px #1e1e1e;">Ongoing bias testing conducted for different environments/scenarios</div><div class=t style="left:687.75px;top:703.00px;font-size:9.8px;line-height:9.8px;color:#1e1e1e;transform:scaleX(0.9522);-webkit-text-stroke:0.2px #1e1e1e;">Testing &amp; Validation</div><div class=t style="left:29.75px;top:717.00px;font-size:9.8px;line-height:9.8px;color:#1e1e1e;transform:scaleX(0.9709);-webkit-text-stroke:0.2px #1e1e1e;">60</div><div class=t style="left:43.66px;top:717.00px;font-size:9.8px;line-height:9.8px;color:#1e1e1e;transform:scaleX(0.9653);-webkit-text-stroke:0.2px #1e1e1e;">Comprehensive bias audit conducted during testing/validation</div><div class=t style="left:687.75px;top:717.00px;font-size:9.8px;line-height:9.8px;color:#1e1e1e;transform:scaleX(0.9522);-webkit-text-stroke:0.2px #1e1e1e;">Testing &amp; Validation</div><div class=t style="left:29.75px;top:731.00px;font-size:9.8px;line-height:9.8px;color:#1e1e1e;transform:scaleX(0.9857);-webkit-text-stroke:0.2px #1e1e1e;">61</div><div class=t style="left:43.95px;top:731.00px;font-size:9.8px;line-height:9.8px;color:#1e1e1e;transform:scaleX(0.9626);-webkit-text-stroke:0.2px #1e1e1e;">Testing methodology, results, limitations, and corrective actions documented</div><div class=t style="left:687.75px;top:731.00px;font-size:9.8px;line-height:9.8px;color:#1e1e1e;transform:scaleX(0.9522);-webkit-text-stroke:0.2px #1e1e1e;">Testing &amp; Validation</div><div class=t style="left:29.75px;top:745.00px;font-size:9.8px;line-height:9.8px;color:#1e1e1e;transform:scaleX(0.9857);-webkit-text-stroke:0.2px #1e1e1e;">62</div><div class=t style="left:43.95px;top:745.00px;font-size:9.8px;line-height:9.8px;color:#1e1e1e;transform:scaleX(0.9591);-webkit-text-stroke:0.2px #1e1e1e;">Testing sufficient to detect unwanted biases</div><div class=t style="left:687.75px;top:745.00px;font-size:9.8px;line-height:9.8px;color:#1e1e1e;transform:scaleX(0.9522);-webkit-text-stroke:0.2px #1e1e1e;">Testing &amp; Validation</div><div class=t style="left:29.75px;top:759.00px;font-size:9.8px;line-height:9.8px;color:#1e1e1e;transform:scaleX(0.9857);-webkit-text-stroke:0.2px #1e1e1e;">63</div><div class=t style="left:43.81px;top:759.00px;font-size:9.8px;line-height:9.8px;color:#1e1e1e;transform:scaleX(0.9339);-webkit-text-stroke:0.2px #1e1e1e;">System-level assessment ensures consistent performance across demographics</div><div class=t style="left:687.75px;top:759.00px;font-size:9.8px;line-height:9.8px;color:#1e1e1e;transform:scaleX(0.9522);-webkit-text-stroke:0.2px #1e1e1e;">Testing &amp; Validation</div><div class=t style="left:29.75px;top:773.00px;font-size:9.8px;line-height:9.8px;color:#1e1e1e;transform:scaleX(0.9709);-webkit-text-stroke:0.2px #1e1e1e;">64</div><div class=t style="left:43.39px;top:773.00px;font-size:9.8px;line-height:9.8px;color:#1e1e1e;transform:scaleX(0.9296);-webkit-text-stroke:0.2px #1e1e1e;">Bias checks assess whether processes reflect biased human decisions</div><div class=t style="left:687.75px;top:773.00px;font-size:9.8px;line-height:9.8px;color:#1e1e1e;transform:scaleX(0.9522);-webkit-text-stroke:0.2px #1e1e1e;">Testing &amp; Validation</div><div class=t style="left:29.75px;top:787.00px;font-size:9.8px;line-height:9.8px;color:#1e1e1e;transform:scaleX(0.9857);-webkit-text-stroke:0.2px #1e1e1e;">65</div><div class=t style="left:43.36px;top:787.00px;font-size:9.8px;line-height:9.8px;color:#1e1e1e;transform:scaleX(0.9638);-webkit-text-stroke:0.2px #1e1e1e;">Independent third-party evaluation performed (including bias assessments)</div><div class=t style="left:687.75px;top:787.00px;font-size:9.8px;line-height:9.8px;color:#1e1e1e;transform:scaleX(0.9522);-webkit-text-stroke:0.2px #1e1e1e;">Testing &amp; Validation</div><div class=t style="left:29.75px;top:801.00px;font-size:9.8px;line-height:9.8px;color:#1e1e1e;transform:scaleX(0.9857);-webkit-text-stroke:0.2px #1e1e1e;">66</div><div class=t style="left:44.10px;top:801.00px;font-size:9.8px;line-height:9.8px;color:#1e1e1e;transform:scaleX(0.9557);-webkit-text-stroke:0.2px #1e1e1e;">Appropriate methodologies used to evaluate biases in generated content</div><div class=t style="left:687.75px;top:801.00px;font-size:9.8px;line-height:9.8px;color:#1e1e1e;transform:scaleX(0.9522);-webkit-text-stroke:0.2px #1e1e1e;">Testing &amp; Validation</div></div></div><div class=a style="left:0;top:258.3px;width:20.2px;height:554.3px;overflow:hidden"><div class=a style="left:0;top:-258.3px;width:20px;height:868px"><div class=t style="left:7.06px;top:257.00px;font-size:9.8px;line-height:9.8px;color:#858585;transform:scaleX(0.9468);">48</div><div class=t style="left:7.06px;top:271.00px;font-size:9.8px;line-height:9.8px;color:#858585;transform:scaleX(0.9468);">49</div><div class=t style="left:6.91px;top:285.00px;font-size:9.8px;line-height:9.8px;color:#858585;transform:scaleX(0.9468);">50</div><div class=t style="left:6.91px;top:299.00px;font-size:9.8px;line-height:9.8px;color:#858585;transform:scaleX(0.9611);">51</div><div class=t style="left:6.91px;top:312.00px;font-size:9.8px;line-height:9.8px;color:#858585;transform:scaleX(0.9611);">52</div><div class=t style="left:6.91px;top:326.00px;font-size:9.8px;line-height:9.8px;color:#858585;transform:scaleX(0.9611);">53</div><div class=t style="left:6.91px;top:340.00px;font-size:9.8px;line-height:9.8px;color:#858585;transform:scaleX(0.9468);">54</div><div class=t style="left:6.91px;top:354.00px;font-size:9.8px;line-height:9.8px;color:#858585;transform:scaleX(0.9611);">55</div><div class=t style="left:6.91px;top:368.00px;font-size:9.8px;line-height:9.8px;color:#858585;transform:scaleX(0.9611);">56</div><div class=t style="left:6.91px;top:382.00px;font-size:9.8px;line-height:9.8px;color:#858585;transform:scaleX(0.9611);">57</div><div class=t style="left:6.91px;top:396.00px;font-size:9.8px;line-height:9.8px;color:#858585;transform:scaleX(0.9611);">58</div><div class=t style="left:6.91px;top:410.00px;font-size:9.8px;line-height:9.8px;color:#858585;transform:scaleX(0.9611);">59</div><div class=t style="left:6.76px;top:424.00px;font-size:9.8px;line-height:9.8px;color:#858585;transform:scaleX(0.9611);">60</div><div class=t style="left:6.75px;top:438.00px;font-size:9.8px;line-height:9.8px;color:#858585;transform:scaleX(0.9757);">61</div><div class=t style="left:6.75px;top:452.00px;font-size:9.8px;line-height:9.8px;color:#858585;transform:scaleX(0.9757);">62</div><div class=t style="left:6.75px;top:466.00px;font-size:9.8px;line-height:9.8px;color:#858585;transform:scaleX(0.9757);">63</div><div class=t style="left:6.76px;top:480.00px;font-size:9.8px;line-height:9.8px;color:#858585;transform:scaleX(0.9611);">64</div><div class=t style="left:6.75px;top:494.00px;font-size:9.8px;line-height:9.8px;color:#858585;transform:scaleX(0.9757);">65</div><div class=t style="left:6.75px;top:508.00px;font-size:9.8px;line-height:9.8px;color:#858585;transform:scaleX(0.9757);">66</div><div class=t style="left:6.75px;top:522.00px;font-size:9.8px;line-height:9.8px;color:#858585;transform:scaleX(0.9757);">67</div><div class=t style="left:6.75px;top:536.00px;font-size:9.8px;line-height:9.8px;color:#858585;transform:scaleX(0.9757);">68</div><div class=t style="left:6.75px;top:550.00px;font-size:9.8px;line-height:9.8px;color:#858585;transform:scaleX(0.9757);">69</div><div class=t style="left:6.76px;top:564.00px;font-size:9.8px;line-height:9.8px;color:#858585;transform:scaleX(0.9611);">70</div><div class=t style="left:6.75px;top:578.00px;font-size:9.8px;line-height:9.8px;color:#858585;transform:scaleX(0.9757);">71</div><div class=t style="left:6.75px;top:592.00px;font-size:9.8px;line-height:9.8px;color:#858585;transform:scaleX(0.9757);">72</div><div class=t style="left:6.75px;top:606.00px;font-size:9.8px;line-height:9.8px;color:#858585;transform:scaleX(0.9757);">73</div><div class=t style="left:6.76px;top:620.00px;font-size:9.8px;line-height:9.8px;color:#858585;transform:scaleX(0.9611);">74</div><div class=t style="left:6.75px;top:634.00px;font-size:9.8px;line-height:9.8px;color:#858585;transform:scaleX(0.9757);">75</div><div class=t style="left:6.75px;top:648.00px;font-size:9.8px;line-height:9.8px;color:#858585;transform:scaleX(0.9757);">76</div><div class=t style="left:6.75px;top:661.00px;font-size:9.8px;line-height:9.8px;color:#858585;transform:scaleX(0.9757);">77</div><div class=t style="left:6.75px;top:675.00px;font-size:9.8px;line-height:9.8px;color:#858585;transform:scaleX(0.9757);">78</div><div class=t style="left:6.75px;top:689.00px;font-size:9.8px;line-height:9.8px;color:#858585;transform:scaleX(0.9757);">79</div><div class=t style="left:6.91px;top:703.00px;font-size:9.8px;line-height:9.8px;color:#858585;transform:scaleX(0.9468);">80</div><div class=t style="left:6.91px;top:717.00px;font-size:9.8px;line-height:9.8px;color:#858585;transform:scaleX(0.9611);">81</div><div class=t style="left:6.91px;top:731.00px;font-size:9.8px;line-height:9.8px;color:#858585;transform:scaleX(0.9611);">82</div><div class=t style="left:6.91px;top:745.00px;font-size:9.8px;line-height:9.8px;color:#858585;transform:scaleX(0.9611);">83</div><div class=t style="left:6.91px;top:759.00px;font-size:9.8px;line-height:9.8px;color:#858585;transform:scaleX(0.9468);">84</div><div class=t style="left:6.91px;top:773.00px;font-size:9.8px;line-height:9.8px;color:#858585;transform:scaleX(0.9611);">85</div><div class=t style="left:6.91px;top:787.00px;font-size:9.8px;line-height:9.8px;color:#858585;transform:scaleX(0.9611);">86</div><div class=t style="left:6.91px;top:801.00px;font-size:9.8px;line-height:9.8px;color:#858585;transform:scaleX(0.9611);">87</div></div></div><div class=a style="left:0;top:239px;width:1024px;height:20.5px;background:#f4f4f4"></div><div class=a style="left:0;top:258.6px;width:1024px;height:1px;background:#dcdcdc"></div><div class=a style="left:432px;top:246.2px;width:59px;height:13.3px;background:#d3e9da"></div><div class=t style="left:28.04px;top:248.00px;font-size:9.4px;line-height:9.4px;color:#787878;">A</div><div class=a style="left:41.70px;top:247px;width:1px;height:11px;background:#e8e8e8"></div><div class=t style="left:233.80px;top:248.00px;font-size:9.4px;line-height:9.4px;color:#787878;">B</div><div class=t style="left:458.10px;top:248.00px;font-size:9.4px;line-height:9.4px;color:#3a7550;-webkit-text-stroke:0.3px #3a7550;">C</div><div class=t style="left:511.70px;top:248.00px;font-size:9.4px;line-height:9.4px;color:#787878;">D</div><div class=a style="left:539.00px;top:247px;width:1px;height:11px;background:#e8e8e8"></div><div class=t style="left:609.05px;top:248.00px;font-size:9.4px;line-height:9.4px;color:#787878;">E</div><div class=a style="left:684.70px;top:247px;width:1px;height:11px;background:#e8e8e8"></div><div class=t style="left:755.72px;top:248.00px;font-size:9.4px;line-height:9.4px;color:#787878;">F</div><div class=a style="left:831.90px;top:247px;width:1px;height:11px;background:#e8e8e8"></div><div class=t style="left:849.98px;top:248.00px;font-size:9.4px;line-height:9.4px;color:#787878;">G</div><div class=a style="left:874.10px;top:247px;width:1px;height:11px;background:#e8e8e8"></div><div class=t style="left:892.42px;top:248.00px;font-size:9.4px;line-height:9.4px;color:#787878;">H</div><div class=a style="left:916.50px;top:247px;width:1px;height:11px;background:#e8e8e8"></div><div class=t style="left:936.95px;top:248.00px;font-size:9.4px;line-height:9.4px;color:#787878;">I</div><div class=a style="left:958.90px;top:247px;width:1px;height:11px;background:#e8e8e8"></div><div class=t style="left:978.42px;top:248.00px;font-size:9.4px;line-height:9.4px;color:#787878;">J</div><div class=a style="left:1001.20px;top:247px;width:1px;height:11px;background:#e8e8e8"></div><div class=t style="left:1019.40px;top:248.00px;font-size:9.4px;line-height:9.4px;color:#787878;">K</div><div class=a style="left:1043.50px;top:247px;width:1px;height:11px;background:#e8e8e8"></div><div class=a style="left:19.7px;top:239px;width:1px;height:573.5px;background:#d0d0d0"></div><svg class=a style="left:9px;top:248px" width="11" height="10"><path d="M9.2 0.7v7.8h-8.1z" fill="#b8b8b8"/></svg><div class=a style="left:0;top:812.5px;width:1024px;height:38.5px;background:#f4f4f4;box-shadow:0 -1px 1px rgba(0,0,0,.04)"></div><div class=a style="left:0;top:850.6px;width:1024px;height:1px;background:#e0e0e0"></div><div class=a style="left:0;top:851.6px;width:1024px;height:17px;background:#fff"></div><div class=t style="left:14.00px;top:859.00px;font-size:15px;line-height:15px;color:#424242;transform:scaleX(0.8857);">Workbook Statistics</div><svg class=a style="left:0;top:815px" width="110" height="30" viewBox="0 815 110 30"><path d="M13.3 826.6l-7.4 5l7.4 5" fill="none" stroke="#c4c4c4" stroke-width="1.1"/><path d="M42.4 826.6l7.4 5l-7.4 5" fill="none" stroke="#c4c4c4" stroke-width="1.1"/><path d="M76.6 826.6h14.2M76.6 831.5h14.2M76.6 836.4h14.2" stroke="#424242" stroke-width="1.4"/></svg><svg class=a style="left:113.6px;top:821px" width="18" height="18" viewBox="0 0 18 18"><rect x="1.5" y="5.6" width="13.1" height="10.4" rx="2.6" fill="none" stroke="#424242" stroke-width="1.3"/><path d="M4.9 5.6v-0.5a3.15 3.15 0 0 1 6.3 0v0.5" fill="none" stroke="#424242" stroke-width="1.3"/><circle cx="8.05" cy="11.2" r="1.05" fill="#424242"/></svg><div class=t style="left:135.54px;top:824.00px;font-size:16.3px;line-height:16.3px;color:#424242;transform:scaleX(0.9865);">Disclaimer &amp; Usage Notes</div><svg class=a style="left:344.6px;top:821px" width="18" height="18" viewBox="0 0 18 18"><rect x="1.5" y="5.6" width="13.1" height="10.4" rx="2.6" fill="none" stroke="#424242" stroke-width="1.3"/><path d="M4.9 5.6v-0.5a3.15 3.15 0 0 1 6.3 0v0.5" fill="none" stroke="#424242" stroke-width="1.3"/><circle cx="8.05" cy="11.2" r="1.05" fill="#424242"/></svg><div class=t style="left:367.05px;top:824.00px;font-size:16.3px;line-height:16.3px;color:#424242;transform:scaleX(0.9851);">Overview &amp; Summary</div><div class=t style="left:544.00px;top:824.00px;font-size:16.3px;line-height:16.3px;color:#242424;transform:scaleX(0.9744);-webkit-text-stroke:0.55px #242424;">Assessment Checklist</div><div class=a style="left:544px;top:847.3px;width:155.4px;height:2.6px;background:#4a7f5c;border-radius:1.3px"></div><svg class=a style="left:722px;top:821px" width="18" height="18" viewBox="0 0 18 18"><rect x="1.5" y="5.6" width="13.1" height="10.4" rx="2.6" fill="none" stroke="#424242" stroke-width="1.3"/><path d="M4.9 5.6v-0.5a3.15 3.15 0 0 1 6.3 0v0.5" fill="none" stroke="#424242" stroke-width="1.3"/><circle cx="8.05" cy="11.2" r="1.05" fill="#424242"/></svg><div class=t style="left:743.78px;top:824.00px;font-size:16.3px;line-height:16.3px;color:#424242;transform:scaleX(0.9487);">Gap Analysis</div><div class=t style="left:857.98px;top:824.00px;font-size:16.3px;line-height:16.3px;color:#424242;transform:scaleX(0.9587);">Evidence Repository</div></body></html>
